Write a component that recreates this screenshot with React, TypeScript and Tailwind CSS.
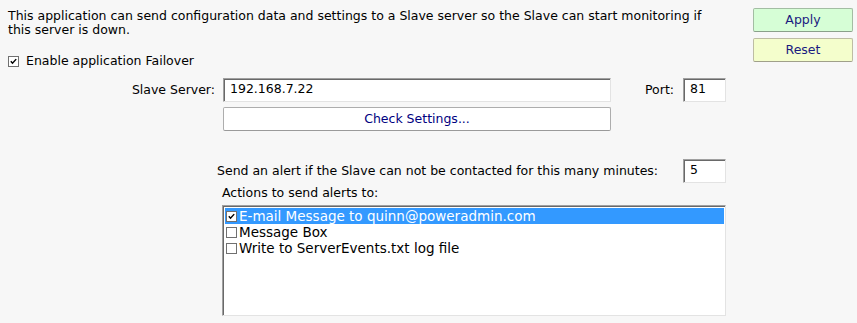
import React from 'react'

const font = { fontFamily: '"DejaVu Sans", Verdana, sans-serif' }

function Check({ className = '' }: { className?: string }) {
  return (
    <svg viewBox="0 0 11 11" className={className}>
      <path d="M2.2 5.2 L4.3 7.6 L8.8 2.6" fill="none" stroke="#000" strokeWidth="1.8" />
    </svg>
  )
}

function Box({ checked }: { checked?: boolean }) {
  return (
    <span className="flex h-[11px] w-[11px] shrink-0 items-center justify-center border border-[#707070] bg-white">
      {checked && <Check className="h-[9px] w-[9px]" />}
    </span>
  )
}

const sunken =
  'border border-t-[#a0a0a0] border-l-[#a0a0a0] border-r-[#e3e3e3] border-b-[#e3e3e3] bg-white shadow-[inset_1px_1px_0_#696969]'

const actions = [
  { label: 'E-mail Message to quinn@poweradmin.com', checked: true, selected: true },
  { label: 'Message Box', checked: false, selected: false },
  { label: 'Write to ServerEvents.txt log file', checked: false, selected: false },
]

export default function App() {
  return (
    <div className="flex h-[323px] w-[857px] bg-[#f7f7f7] text-[12.5px] leading-[14px] text-black" style={font}>
      <div className="w-[745px]">
        <p className="pl-2 pt-[9px]">
          This application can send configuration data and settings to a Slave server so the Slave can start monitoring if
          <br />
          this server is down.
        </p>

        <label className="mt-[17px] flex items-center gap-[7px] pl-2">
          <Box checked />
          <span>Enable application Failover</span>
        </label>

        <div className="mt-[10px] flex w-[726px] items-center">
          <span className="w-[215px] text-right">Slave Server:</span>
          <div className={`ml-[8px] h-[24px] w-[388px] pl-[6px] pt-[3px] ${sunken}`}>192.168.7.22</div>
          <span className="w-[72px] pr-[9px] text-right">Port:</span>
          <div className={`h-[24px] w-[43px] pl-[6px] pt-[3px] ${sunken}`}>81</div>
        </div>

        <button className="ml-[223px] mt-[5px] h-[24px] w-[388px] rounded-[2px] border border-[#adadad] border-b-[#9a9a9a] bg-white text-[#000080]">
          Check Settings...
        </button>

        <div className="mt-[28px] flex w-[726px] items-center">
          <span className="ml-[217px]">Send an alert if the Slave can not be contacted for this many minutes:</span>
          <div className={`ml-auto h-[24px] w-[43px] pl-[6px] pt-[3px] ${sunken}`}>5</div>
        </div>

        <div className="ml-[222px] mt-[3px]">Actions to send alerts to:</div>

        <div
          className={`ml-[222px] mt-[5px] h-[111px] w-[504px] pl-[2px] pr-[1px] pt-[2px] text-[13.5px] ${sunken}`}
        >
          {actions.map((a) => (
            <div
              key={a.label}
              className={`flex h-[16px] items-center gap-[2px] pl-[1px] ${a.selected ? 'bg-[#3399ff] text-white' : ''}`}
            >
              <Box checked={a.checked} />
              <span>{a.label}</span>
            </div>
          ))}
        </div>
      </div>

      <div className="ml-[8px] flex flex-col gap-[6px] pt-[8px]">
        <button className="h-[24px] w-[100px] rounded-[2px] border border-[#a3bda3] border-b-[#8aa08a] bg-[#d6fed6] text-[#1a1a80]">
          Apply
        </button>
        <button className="h-[24px] w-[100px] rounded-[2px] border border-[#bdbda3] border-b-[#a0a08a] bg-[#f4fecc] text-[#1a1a80]">
          Reset
        </button>
      </div>
    </div>
  )
}
